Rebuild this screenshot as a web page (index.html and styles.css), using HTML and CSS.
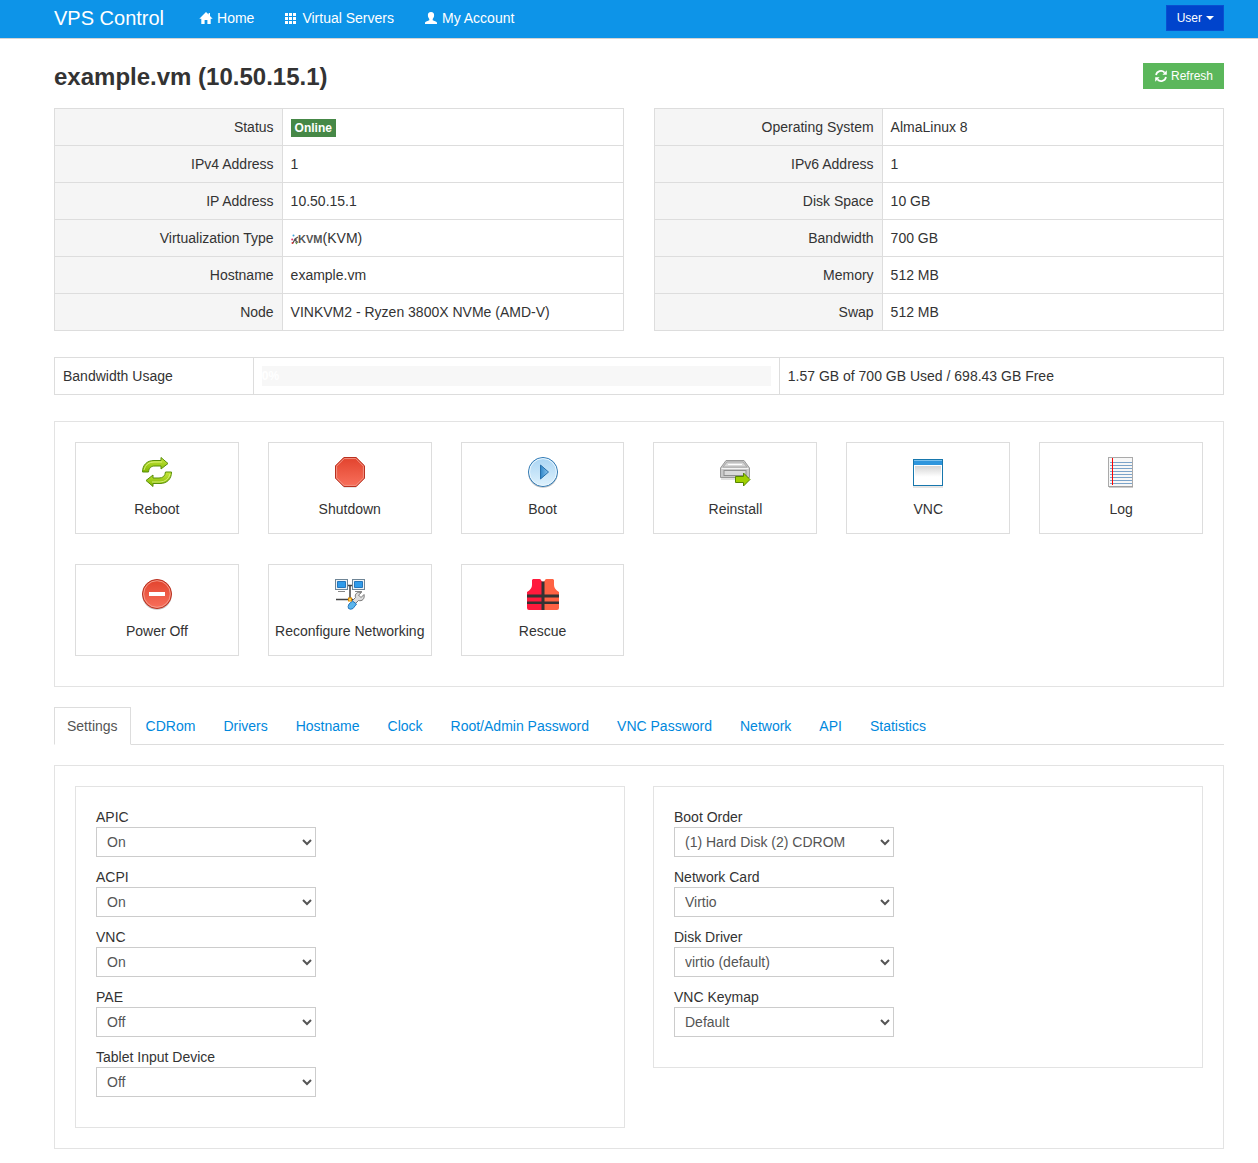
FILE: index.html
```html
<!DOCTYPE html>
<html lang="en">
<head>
  <meta charset="UTF-8">
  <meta name="viewport" content="width=device-width, initial-scale=1">
  <title>VPS Control - example.vm</title>
  <link rel="stylesheet" href="styles.css">
</head>
<body>
  <header class="navbar">
    <a class="brand" href="#">VPS Control</a>
    <nav>
      <ul>
        <li><a href="#">
          <svg width="14" height="14" viewBox="0 0 14 14" fill="#fff"><path d="M7 1 0.3 7.8H2.3V13H5.6V9H8.4V13H11.7V7.8H13.7L11 5V2H9.6V3.6Z"/></svg>
          Home</a></li>
        <li><a href="#">
          <svg width="14" height="14" viewBox="0 0 14 14" fill="#fff"><path d="M1 2h3v3H1zM5 2h3v3H5zM9 2h3v3H9zM1 6h3v3H1zM5 6h3v3H5zM9 6h3v3H9zM1 10h3v3H1zM5 10h3v3H5zM9 10h3v3H9z"/></svg>
          Virtual Servers</a></li>
        <li><a href="#">
          <svg width="14" height="14" viewBox="0 0 14 14" fill="#fff"><path d="M7 1C9.2 1 10.3 2.3 10.1 4.6 10 6.3 9.3 7.3 8.7 7.9V9.3L12.2 10.8Q13 11.2 13 12V13H1V12Q1 11.2 1.8 10.8L5.3 9.3V7.9C4.700 7.300 4 6.300 3.900 4.600 3.700 2.300 4.800 1 7 1Z"/></svg>
          My Account</a></li>
      </ul>
    </nav>
    <button type="button" class="btn btn-user">User <span class="caret"></span></button>
  </header>

  <main>
    <div class="page-title">
      <h1>example.vm (10.50.15.1)</h1>
      <button type="button" class="btn btn-refresh">
        <svg width="12" height="12" viewBox="0 0 12 12" fill="none" stroke="#fff" stroke-width="1.7"><path d="M1 5A5 5 0 0 1 9.6 2.6M11 7A5 5 0 0 1 2.4 9.4"/><path d="M11.8 0.3V4.7H7.4ZM0.2 11.7V7.3H4.6Z" fill="#fff" stroke="none"/></svg>
        Refresh</button>
    </div>

    <div class="info">
      <table>
        <tr><th scope="row">Status</th><td><span class="label-online">Online</span></td></tr>
        <tr><th scope="row">IPv4 Address</th><td>1</td></tr>
        <tr><th scope="row">IP Address</th><td>10.50.15.1</td></tr>
        <tr><th scope="row">Virtualization Type</th><td><svg class="kvm-logo" width="32" height="14" viewBox="0 0 32 14"><path d="M2 11 4 7 7 5M3 7.5 7 10.500M5 7V11" stroke="#555" stroke-width="1.2" fill="none"/><circle cx="2.5" cy="3.5" r="1" fill="#3ba3d8"/><circle cx="1.2" cy="7.5" r="1" fill="#e0356b"/><circle cx="1.5" cy="11" r="1" fill="#c33"/><circle cx="5.5" cy="11.5" r="0.8" fill="#5a3"/><text x="7" y="11" class="kvm-text">KVM</text></svg>(KVM)</td></tr>
        <tr><th scope="row">Hostname</th><td>example.vm</td></tr>
        <tr><th scope="row">Node</th><td>VINKVM2 - Ryzen 3800X NVMe (AMD-V)</td></tr>
      </table>
      <table>
        <tr><th scope="row">Operating System</th><td>AlmaLinux 8</td></tr>
        <tr><th scope="row">IPv6 Address</th><td>1</td></tr>
        <tr><th scope="row">Disk Space</th><td>10 GB</td></tr>
        <tr><th scope="row">Bandwidth</th><td>700 GB</td></tr>
        <tr><th scope="row">Memory</th><td>512 MB</td></tr>
        <tr><th scope="row">Swap</th><td>512 MB</td></tr>
      </table>
    </div>

    <table class="usage">
      <tr>
        <td class="usage-name">Bandwidth Usage</td>
        <td class="usage-bar"><div class="progress">0%</div></td>
        <td>1.57 GB of 700 GB Used / 698.43 GB Free</td>
      </tr>
    </table>

    <section class="panel actions">
      <a href="#" class="tile">
        <svg width="32" height="32" viewBox="0 0 32 32">
          <defs><linearGradient id="green" x1="0" y1="0" x2="0" y2="1"><stop offset="0" stop-color="#c9e83c"/><stop offset="1" stop-color="#7fb800"/></linearGradient></defs>
          <g fill="url(#green)" stroke="#5a8f0a" stroke-linejoin="round">
            <path d="M1.500 16C1.500 9 6 4.500 13 4.500H20V1.500L27 7.500 20 13V10H14C10 10 8 12 7.500 16Z"/>
            <path d="M30.500 16C30.500 23 26 27.500 19 27.500H12V30.500L5 24.500 12 19V22H18C22 22 24 20 24.500 16Z"/>
          </g>
          <path d="M3 14Q5 6 13 6H21M29 18Q27 25.500 19 26H11" fill="none" stroke="#e3f58e" stroke-width="0.8"/>
        </svg>
        Reboot
      </a>
      <a href="#" class="tile">
        <svg width="32" height="32" viewBox="0 0 32 32">
          <defs><linearGradient id="red" x1="0" y1="0" x2="0" y2="1"><stop offset="0" stop-color="#e2432d"/><stop offset="1" stop-color="#f8705c"/></linearGradient></defs>
          <path d="M10 2.500H22L31 11V22L22 31.500H10L1 22V11Z" fill="#ccc"/>
          <path d="M9.800 1.500H22.200L30.500 9.800V22.200L22.200 30.500H9.800L1.500 22.200V9.800Z" fill="url(#red)" stroke="#b8301f"/>
          <path d="M10.200 2.600H21.800L29.400 10.200V21.800L21.800 29.400H10.200L2.600 21.800V10.200Z" fill="none" stroke="#f29383"/>
        </svg>
        Shutdown
      </a>
      <a href="#" class="tile">
        <svg width="32" height="32" viewBox="0 0 32 32">
          <defs>
            <linearGradient id="sky" x1="0" y1="0" x2="0" y2="1"><stop offset="0" stop-color="#a9d4f3"/><stop offset="1" stop-color="#dff2fd"/></linearGradient>
            <linearGradient id="play"><stop offset="0" stop-color="#2f86c9"/><stop offset="1" stop-color="#8cc6ee"/></linearGradient>
          </defs>
          <circle cx="16" cy="17" r="14.800" fill="#c4c4c4"/>
          <circle cx="16" cy="16" r="14.500" fill="url(#sky)" stroke="#2f78b3"/>
          <circle cx="16" cy="16" r="13.400" fill="none" stroke="#e9f6fe"/>
          <path d="M13.500 9V23L21.500 16Z" fill="url(#play)" stroke="#256fab"/>
        </svg>
        Boot
      </a>
      <a href="#" class="tile">
        <svg width="32" height="32" viewBox="0 0 32 32">
          <path d="M7 4.500H25L30.500 12V21.500H1.500V12Z" fill="#c9c9c9" stroke="#999" stroke-linejoin="round"/>
          <path d="M8 6H24L28 11H4Z" fill="#d8d8d8" stroke="#a8a8a8"/>
          <path d="M9 8.500H23" stroke="#fff"/>
          <path d="M2.500 12.500H29.500" stroke="#f4f4f4"/>
          <rect x="5" y="14.500" width="22" height="5" fill="#d9d9d9" stroke="#8e8e8e"/>
          <path d="M2 23H18" stroke="#c4c4c4"/>
          <path d="M16.500 20.500H24.500V17L31 23.500 24.500 30V26.500H16.500Z" fill="#9fd000" stroke="#568500" stroke-linejoin="round"/>
        </svg>
        Reinstall
      </a>
      <a href="#" class="tile">
        <svg width="32" height="32" viewBox="0 0 32 32">
          <defs><linearGradient id="pane" x1="0" y1="0" x2="0" y2="1"><stop offset="0" stop-color="#d5d5d5"/><stop offset="0.6" stop-color="#fff"/></linearGradient></defs>
          <path d="M1 31H31" stroke="#ccc"/>
          <rect x="1.500" y="3.500" width="29" height="26" fill="#fff" stroke="#1777ad"/>
          <rect x="2" y="4" width="28" height="5" fill="#2f96dd"/>
          <path d="M2 4.500H30" stroke="#7cc2ee"/>
          <rect x="3" y="10" width="26" height="18" fill="url(#pane)"/>
        </svg>
        VNC
      </a>
      <a href="#" class="tile">
        <svg width="32" height="32" viewBox="0 0 32 32">
          <rect x="3.500" y="1.500" width="24" height="29" fill="#f7f7f7" stroke="#aaa"/>
          <path d="M4 31H28" stroke="#999"/>
          <path d="M5 6.500H27M5 9.500H27M5 12.500H27M5 15.500H27M5 18.500H27M5 21.500H27M5 24.500H27M5 27.500H27" stroke="#7ba3c9"/>
          <path d="M7.500 2V29" stroke="#f00"/>
        </svg>
        Log
      </a>
      <a href="#" class="tile">
        <svg width="32" height="32" viewBox="0 0 32 32">
          <circle cx="16" cy="17" r="14.800" fill="#c4c4c4"/>
          <circle cx="16" cy="16" r="14.500" fill="url(#red)" stroke="#b8301f"/>
          <circle cx="16" cy="16" r="13.300" fill="none" stroke="#f49a8a"/>
          <rect x="8" y="14" width="16" height="4" fill="#fff"/>
        </svg>
        Power Off
      </a>
      <a href="#" class="tile">
        <svg width="32" height="32" viewBox="0 0 32 32">
          <path d="M12 7.500H20M16 7V21M2 21.500H19" fill="none" stroke="#444" stroke-width="1.5"/>
          <g fill="#2f9bea" stroke="#6f8596">
            <rect x="1.500" y="1.500" width="12" height="10" fill="#eef3f6"/><path d="M3.500 3.500H11.500V9.500H3.500Z" stroke="#2476bd"/>
            <rect x="18.500" y="1.500" width="12" height="10" fill="#eef3f6"/><path d="M20.500 3.500H28.500V9.500H20.500Z" stroke="#2476bd"/>
          </g>
          <path d="M4 13.500H11M21 13.500H28" stroke="#888"/>
          <path d="M30 16.500 27 19.500 24.500 17 27.500 14.500C23 13.500 20.500 16 21.500 19.500L18 23 21 26 24.500 22.500C28 23.500 31 21 30 16.500Z" fill="#ddd" stroke="#777"/>
          <path d="M18.500 23 22.500 26 19 30.500Q16.500 32 14.500 30.500 13.500 28.500 15 26Z" fill="#5bb5ec" stroke="#2476bd"/>
          <rect x="14.500" y="20" width="3" height="3" fill="#ffe36a" stroke="#e08a00"/>
        </svg>
        Reconfigure Networking
      </a>
      <a href="#" class="tile">
        <svg width="32" height="32" viewBox="0 0 32 32">
          <path d="M6 1H12.500Q14 1 14.500 3L16 4V32H2Q0 32 0 30V14Q5 11 5 7V2Z" fill="#ff1a3c"/>
          <path d="M26 1H19.500Q18 1 17.500 3L16 4V32H30Q32 32 32 30V14Q27 11 27 7V2Z" fill="#ff6243"/>
          <path d="M14.500 3.500H17.500V32H14.500ZM0 16.500H32V19.500H0ZM0 23.500H32V26H0Z" fill="#333"/>
        </svg>
        Rescue
      </a>
    </section>

    <ul class="tabs">
      <li class="active"><a href="#">Settings</a></li>
      <li><a href="#">CDRom</a></li>
      <li><a href="#">Drivers</a></li>
      <li><a href="#">Hostname</a></li>
      <li><a href="#">Clock</a></li>
      <li><a href="#">Root/Admin Password</a></li>
      <li><a href="#">VNC Password</a></li>
      <li><a href="#">Network</a></li>
      <li><a href="#">API</a></li>
      <li><a href="#">Statistics</a></li>
    </ul>

    <section class="panel settings">
      <form class="panel">
        <label for="apic">APIC</label>
        <select id="apic"><option>On</option><option>Off</option></select>
        <label for="acpi">ACPI</label>
        <select id="acpi"><option>On</option><option>Off</option></select>
        <label for="vnc">VNC</label>
        <select id="vnc"><option>On</option><option>Off</option></select>
        <label for="pae">PAE</label>
        <select id="pae"><option>Off</option><option>On</option></select>
        <label for="tablet">Tablet Input Device</label>
        <select id="tablet"><option>Off</option><option>On</option></select>
      </form>
      <form class="panel">
        <label for="boot">Boot Order</label>
        <select id="boot"><option>(1) Hard Disk (2) CDROM</option><option>(1) CDROM (2) Hard Disk</option></select>
        <label for="nic">Network Card</label>
        <select id="nic"><option>Virtio</option></select>
        <label for="disk">Disk Driver</label>
        <select id="disk"><option>virtio (default)</option></select>
        <label for="keymap">VNC Keymap</label>
        <select id="keymap"><option>Default</option></select>
      </form>
    </section>
  </main>
</body>
</html>
```

FILE: styles.css
```css
* {
  box-sizing: border-box;
}

body {
  margin: 0;
  background: #fff;
  color: #333;
  font-family: "Liberation Sans", Arial, sans-serif;
  font-size: 14px;
  line-height: 20px;
}

a {
  color: #0088dd;
  text-decoration: none;
}

.navbar {
  display: flex;
  align-items: center;
  height: 39px;
  padding: 0 34px 2px 54px;
  background: #0d94e8;
  border-bottom: 1px solid #d4d4d4;
}

.navbar a {
  color: #fff;
}

.navbar .brand {
  font-size: 20px;
}

.navbar nav {
  flex: 1;
  margin-left: 35px;
}

.navbar ul {
  display: flex;
  gap: 30px;
  margin: 0;
  padding: 0;
  list-style: none;
}

.navbar li a {
  display: flex;
  align-items: center;
  gap: 4px;
}

.btn {
  display: flex;
  align-items: center;
  gap: 4px;
  height: 26px;
  border: 0;
  color: #fff;
  font-family: inherit;
  font-size: 12px;
  cursor: pointer;
}

.btn-user {
  padding: 0 9px 0 10px;
  background: #0044cc;
  border: 1px solid #0a50d0;
}

.btn-refresh {
  padding: 0 11px 0 12px;
  background: #5bb75b;
}

.caret {
  border-top: 4px solid #fff;
  border-left: 4px solid transparent;
  border-right: 4px solid transparent;
}

main {
  padding: 24px 34px 14px 54px;
}

.page-title {
  display: flex;
  justify-content: space-between;
  margin-bottom: 17px;
}

h1 {
  margin: 0;
  font-size: 24px;
  line-height: 28px;
}

.info {
  display: grid;
  grid-template-columns: 1fr 1fr;
  align-items: start;
  gap: 30px;
  margin-bottom: 26px;
}

table {
  width: 100%;
  border-collapse: collapse;
}

th,
td {
  height: 37px;
  padding: 8px;
  border: 1px solid #ddd;
  text-align: left;
}

th {
  width: 40%;
  background: #f5f5f5;
  font-weight: normal;
  text-align: right;
}

.label-online {
  display: inline-block;
  padding: 2px 4px;
  background: #468847;
  color: #fff;
  font-size: 12px;
  font-weight: bold;
  line-height: 14px;
}

.kvm-logo {
  vertical-align: middle;
}

.kvm-text {
  fill: #555;
  font-size: 11px;
  font-weight: bold;
}

.usage {
  margin-bottom: 26px;
}

.usage-name {
  width: 17%;
}

.usage-bar {
  width: 45%;
}

.progress {
  height: 20px;
  background: #f7f7f7;
  color: #fff;
  font-size: 12px;
  font-weight: bold;
}

.panel {
  padding: 20px;
  border: 1px solid #e3e3e3;
}

.actions {
  display: grid;
  grid-template-columns: repeat(6, 1fr);
  gap: 30px 29px;
  margin-bottom: 20px;
  padding-bottom: 30px;
}

.tile {
  display: flex;
  flex-direction: column;
  align-items: center;
  gap: 11px;
  height: 92px;
  padding-top: 13px;
  border: 1px solid #ddd;
  color: #333;
  white-space: nowrap;
}

.tabs {
  display: flex;
  gap: 2px;
  margin: 0 0 20px;
  padding: 0;
  border-bottom: 1px solid #ddd;
  list-style: none;
}

.tabs li {
  margin-bottom: -1px;
}

.tabs a {
  display: block;
  padding: 8px 12px;
  border: 1px solid transparent;
}

.tabs .active a {
  background: #fff;
  border-color: #ddd;
  border-bottom-color: #fff;
  color: #555;
}

.settings {
  display: grid;
  grid-template-columns: 1fr 1fr;
  align-items: start;
  gap: 28px;
}

.settings label {
  display: block;
}

.settings select {
  display: block;
  width: 220px;
  height: 30px;
  margin-bottom: 10px;
  padding: 4px 6px;
  background: #fff;
  border: 1px solid #ccc;
  border-radius: 0;
  color: #555;
  font-family: inherit;
  font-size: 14px;
}
```
